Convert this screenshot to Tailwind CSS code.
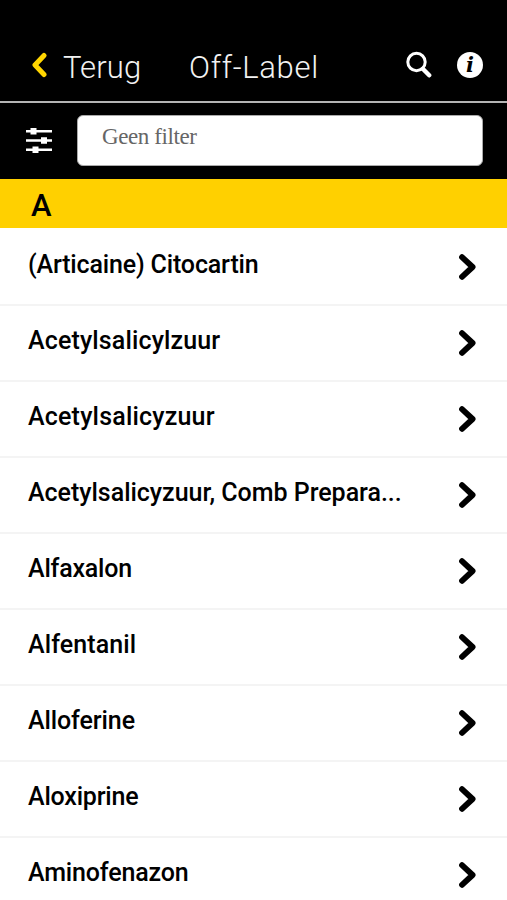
<!DOCTYPE html>
<html lang="nl">

<head>
    <meta charset="UTF-8">
    <meta name="viewport" content="width=device-width, initial-scale=1.0">
    <script src="https://cdn.jsdelivr.net/npm/@tailwindcss/browser@4"></script>
    <title>Off-Label</title>
</head>

<body class="bg-white text-black font-['Roboto',sans-serif] h-[900px] overflow-hidden">
    <header class="bg-black h-[103px] pt-9 border-b-2 border-[#b4b4b4] flex items-center text-[#f2f2f2] font-light text-[31px]">
        <a href="#" class="flex items-center w-[189px] pl-[31px]">
            <svg class="w-4 h-[26px] -mt-2 mr-4" viewBox="0 0 16 26" fill="none" stroke="#ffd500" stroke-width="5" stroke-linecap="round" stroke-linejoin="round">
                <path d="M13 3.5 4 13l9 9.5" />
            </svg>
            <span class="tracking-[0.1px]">Terug</span>
        </a>
        <h1 class="w-[217px] tracking-[0.7px]">Off-Label</h1>
        <svg class="w-[26px] h-[27px] -mt-2" viewBox="0 0 26 27" fill="none" stroke="#fff">
            <circle cx="10.5" cy="11" r="8.7" stroke-width="3" />
            <path d="m17 18 6.2 6.3" stroke-width="4.4" stroke-linecap="round" />
        </svg>
        <span class="ml-[25px] -mt-2 w-[26px] h-[26px] rounded-full bg-white text-black flex items-center justify-center font-['DejaVu_Serif',serif] font-bold italic text-[21px] leading-none">i</span>
    </header>

    <div class="bg-black h-[76px] pb-0.5 flex items-center pl-[26px]">
        <svg class="w-[26px] h-[28px] mr-[25px]" viewBox="0 0 26 28" fill="#fff">
            <path d="M0 4h26v2.4H0zM0 13.3h26v2.4H0zM0 22.6h26V25H0z" />
            <path d="M4.5 2h6v6.5h-6zM15 11.3h6v6.5h-6zM6.5 20.5h6V27h-6z" />
        </svg>
        <div class="w-[406px] h-[51px] rounded-md bg-white border border-[#aaa] pl-6 pt-1.5 text-[23px] leading-[30px] tracking-[-0.4px] text-[#666] font-['Liberation_Serif',serif]">Geen filter</div>
    </div>

    <h2 class="bg-[#ffd000] h-[49px] pl-[31px] text-[31px] leading-[54px] font-medium">A</h2>

    <ul id="list" class="text-[25px] font-medium"></ul>

    <script>
        const items = [
            ['(Articaine) Citocartin', 'tracking-[-0.16px]'],
            ['Acetylsalicylzuur', 'tracking-[0.14px]'],
            ['Acetylsalicyzuur', 'tracking-[0.2px]'],
            ['Acetylsalicyzuur, Comb Prepara...', 'tracking-[-0.02px]'],
            ['Alfaxalon', 'tracking-[-0.2px]'],
            ['Alfentanil', 'tracking-[0.1px]'],
            ['Alloferine', 'tracking-[-0.1px]'],
            ['Aloxiprine', 'tracking-[-0.2px]'],
            ['Aminofenazon', 'tracking-[-0.15px]']
        ];

        document.getElementById('list').innerHTML = items.map(([name, tracking]) => `
            <li class="h-[76px] first:h-[78px] pt-0.5 first:pt-1 border-b-2 border-[#f4f4f4] flex items-center justify-between pl-7 pr-[31px]">
                <span class="whitespace-nowrap -mt-1.5 ${tracking}">${name}</span>
                <svg class="w-[17px] h-[26px] -mt-0.5" viewBox="0 0 17 26" fill="none" stroke="#000" stroke-width="5.8" stroke-linecap="round" stroke-linejoin="round">
                    <path d="M3 3.2 13.6 13 3 22.8" />
                </svg>
            </li>
        `).join('');
    </script>
</body>

</html>
